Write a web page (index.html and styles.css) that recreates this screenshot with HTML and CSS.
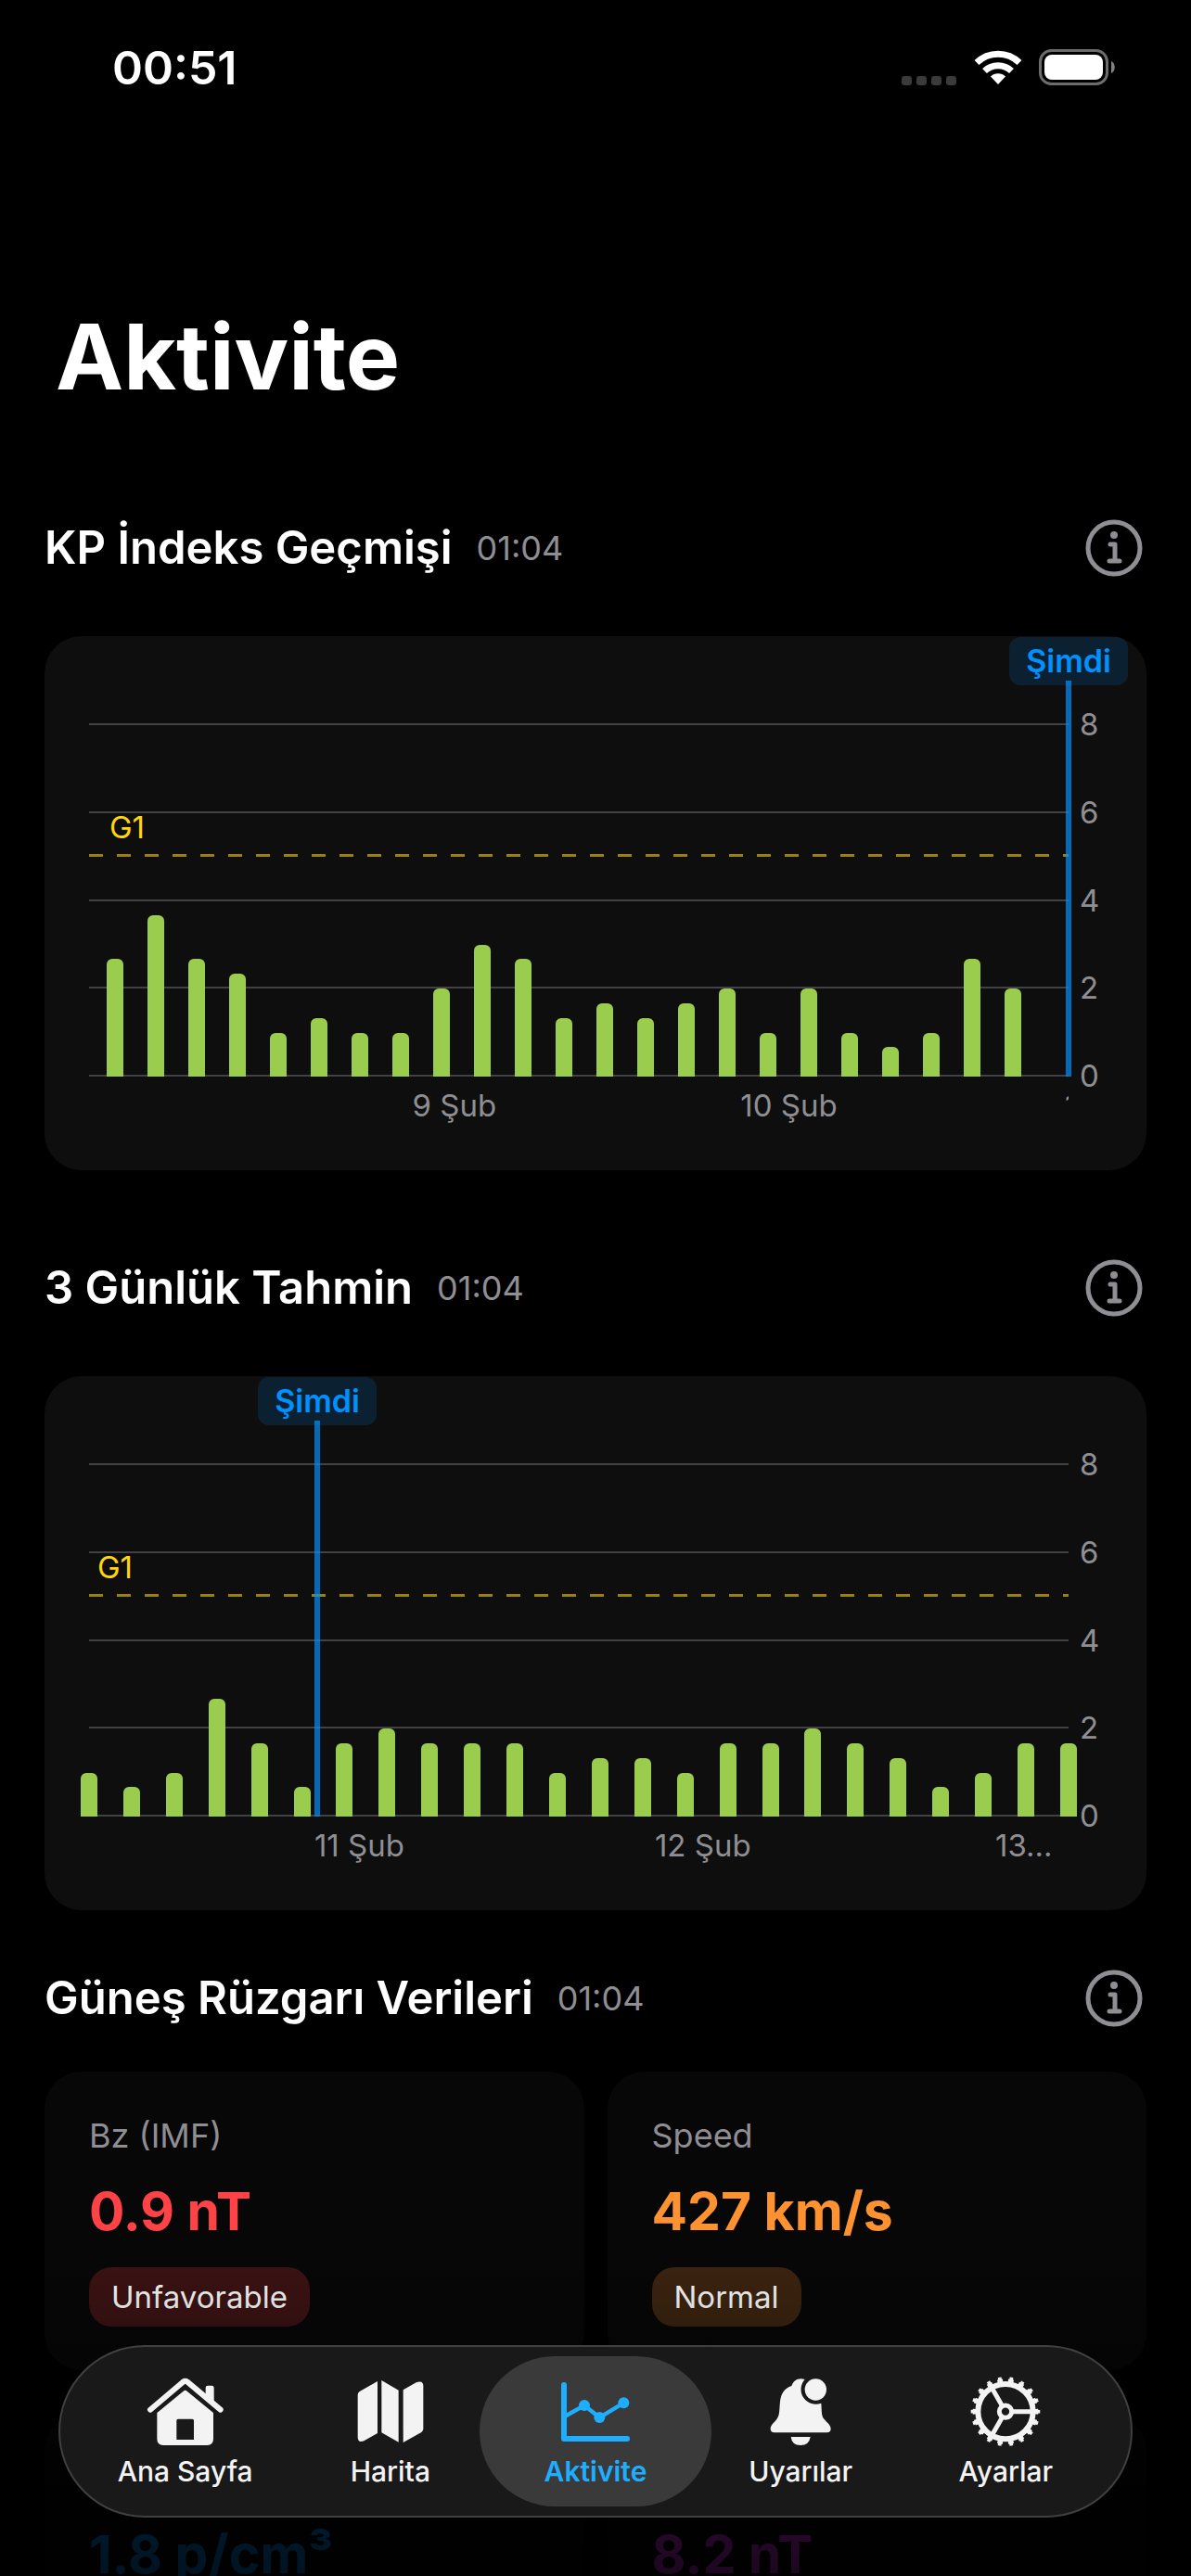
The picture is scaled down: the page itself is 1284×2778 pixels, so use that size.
FILE: index.html
```html
<!DOCTYPE html>
<html lang="tr">
<head>
    <meta charset="UTF-8">
    <meta name="viewport" content="width=device-width, initial-scale=1.0">
    <title>Aktivite</title>
    <link rel="stylesheet" href="styles.css">
</head>
<body>
    <svg class="sprite" aria-hidden="true">
        <symbol id="info" viewBox="0 0 62 62">
            <circle cx="31" cy="31" r="28" fill="none" stroke="currentColor" stroke-width="5"/>
            <circle cx="31" cy="17" r="4" fill="currentColor"/>
            <path d="M27 27h5v18M26 45h11" fill="none" stroke="currentColor" stroke-width="5" stroke-linecap="round" stroke-linejoin="round"/>
        </symbol>
    </svg>

    <header class="status-bar">
        <span class="clock">00:51</span>
        <div class="status-icons">
            <svg width="60" height="40" viewBox="0 0 60 40">
                <g fill="#3a3a3a">
                    <rect x="0" y="29" width="11" height="10" rx="3"/>
                    <rect x="16" y="29" width="11" height="10" rx="3"/>
                    <rect x="32" y="29" width="11" height="10" rx="3"/>
                    <rect x="48" y="29" width="11" height="10" rx="3"/>
                </g>
            </svg>
            <svg width="52" height="40" viewBox="0 0 52 40">
                <g fill="none" stroke="#fff" stroke-width="7">
                    <path d="M3 14.500A33 33 0 0 1 49 14.500"/>
                    <path d="M11.500 23.500A21 21 0 0 1 40.500 23.500"/>
                </g>
                <path d="M26 38l-8-8.500a11.500 11.500 0 0 1 16 0z" fill="#fff"/>
            </svg>
            <svg width="84" height="40" viewBox="0 0 84 40">
                <rect x="1.500" y="1.500" width="72" height="36" rx="12" fill="none" stroke="#6c6c6c" stroke-width="3"/>
                <rect x="6" y="6" width="63" height="27" rx="8" fill="#fff"/>
                <path d="M78 13c5 2 5 11 0 13z" fill="#808080"/>
            </svg>
        </div>
    </header>

    <main class="content">
        <h1>Aktivite</h1>

        <section>
            <div class="section-header">
                <h2>KP İndeks Geçmişi</h2>
                <time>01:04</time>
                <button class="info-button" type="button" aria-label="Bilgi"><svg><use href="#info"/></svg></button>
            </div>
            <div class="card chart">
                <div class="plot">
                    <ul class="grid-lines">
                        <li><span>8</span></li>
                        <li><span>6</span></li>
                        <li><span>4</span></li>
                        <li><span>2</span></li>
                        <li><span>0</span></li>
                    </ul>
                    <div class="threshold threshold-history"><span>G1</span></div>
                    <div class="bars bars-history">
                        <i style="--kp: 2.67"></i>
                        <i style="--kp: 3.67"></i>
                        <i style="--kp: 2.67"></i>
                        <i style="--kp: 2.33"></i>
                        <i style="--kp: 1"></i>
                        <i style="--kp: 1.33"></i>
                        <i style="--kp: 1"></i>
                        <i style="--kp: 1"></i>
                        <i style="--kp: 2"></i>
                        <i style="--kp: 3"></i>
                        <i style="--kp: 2.67"></i>
                        <i style="--kp: 1.33"></i>
                        <i style="--kp: 1.67"></i>
                        <i style="--kp: 1.33"></i>
                        <i style="--kp: 1.67"></i>
                        <i style="--kp: 2"></i>
                        <i style="--kp: 1"></i>
                        <i style="--kp: 2"></i>
                        <i style="--kp: 1"></i>
                        <i style="--kp: 0.67"></i>
                        <i style="--kp: 1"></i>
                        <i style="--kp: 2.67"></i>
                        <i style="--kp: 2"></i>
                    </div>
                    <div class="now" style="left: 100%"><span>Şimdi</span></div>
                </div>
                <div class="days days-history">
                    <span>9 Şub</span>
                    <span>10 Şub</span>
                    <span>11 Şub</span>
                </div>
            </div>
        </section>

        <section>
            <div class="section-header">
                <h2>3 Günlük Tahmin</h2>
                <time>01:04</time>
                <button class="info-button" type="button" aria-label="Bilgi"><svg><use href="#info"/></svg></button>
            </div>
            <div class="card chart">
                <div class="plot">
                    <ul class="grid-lines">
                        <li><span>8</span></li>
                        <li><span>6</span></li>
                        <li><span>4</span></li>
                        <li><span>2</span></li>
                        <li><span>0</span></li>
                    </ul>
                    <div class="threshold threshold-forecast"><span>G1</span></div>
                    <div class="bars bars-forecast">
                        <i style="--kp: 1"></i>
                        <i style="--kp: 0.67"></i>
                        <i style="--kp: 1"></i>
                        <i style="--kp: 2.67"></i>
                        <i style="--kp: 1.67"></i>
                        <i style="--kp: 0.67"></i>
                        <i style="--kp: 1.67"></i>
                        <i style="--kp: 2"></i>
                        <i style="--kp: 1.67"></i>
                        <i style="--kp: 1.67"></i>
                        <i style="--kp: 1.67"></i>
                        <i style="--kp: 1"></i>
                        <i style="--kp: 1.33"></i>
                        <i style="--kp: 1.33"></i>
                        <i style="--kp: 1"></i>
                        <i style="--kp: 1.67"></i>
                        <i style="--kp: 1.67"></i>
                        <i style="--kp: 2"></i>
                        <i style="--kp: 1.67"></i>
                        <i style="--kp: 1.33"></i>
                        <i style="--kp: 0.67"></i>
                        <i style="--kp: 1"></i>
                        <i style="--kp: 1.67"></i>
                        <i style="--kp: 1.67"></i>
                    </div>
                    <div class="now" style="left: 23.3%"><span>Şimdi</span></div>
                </div>
                <div class="days days-forecast">
                    <span>11 Şub</span>
                    <span>12 Şub</span>
                    <span>13...</span>
                </div>
            </div>
        </section>

        <section>
            <div class="section-header">
                <h2>Güneş Rüzgarı Verileri</h2>
                <time>01:04</time>
                <button class="info-button" type="button" aria-label="Bilgi"><svg><use href="#info"/></svg></button>
            </div>
            <div class="wind-grid">
                <div class="wind-card red">
                    <h3>Bz (IMF)</h3>
                    <p>0.9 nT</p>
                    <span class="badge">Unfavorable</span>
                </div>
                <div class="wind-card orange">
                    <h3>Speed</h3>
                    <p>427 km/s</p>
                    <span class="badge">Normal</span>
                </div>
                <div class="wind-card blue">
                    <h3>Density</h3>
                    <p>1.8 p/cm³</p>
                </div>
                <div class="wind-card purple">
                    <h3>Bt (Total)</h3>
                    <p>8.2 nT</p>
                </div>
            </div>
        </section>
    </main>

    <div class="bottom-fade"></div>

    <nav class="tab-bar">
        <a href="#">
            <svg viewBox="9 36 252 234">
                <path d="M21 146L127 56Q134 51 141 56L248 146" fill="none" stroke="currentColor" stroke-width="18" stroke-linecap="round" stroke-linejoin="round"/>
                <path d="M200 104V75q0-7 7-7h13q7 0 7 7v52z" fill="currentColor"/>
                <path d="M128 86q6-5 12 0l85 70v85q0 20-20 20H63q-20 0-20-20v-85zM106 181v62h56v-62q0-5-5-5h-46q-5 0-5 5z" fill="currentColor" fill-rule="evenodd"/>
            </svg>
            Ana Sayfa
        </a>
        <a href="#">
            <svg viewBox="673 36 252 234">
                <g fill="currentColor">
                    <path d="M757 54v168l-44 25q-20 8-20-12V98q0-7 6-11z"/>
                    <path d="M770 51l55 32v168l-55-31z"/>
                    <path d="M840 82l42-24q23-9 23 12v138q0 7-6 11l-59 33z"/>
                </g>
            </svg>
            Harita
        </a>
        <a class="active" href="#" aria-current="page">
            <svg viewBox="1332 36 252 234">
                <path d="M1356 66V240H1560" fill="none" stroke="currentColor" stroke-width="18" stroke-linecap="round" stroke-linejoin="round"/>
                <path d="M1358 168L1422 132L1471 171L1549 124" fill="none" stroke="currentColor" stroke-width="13"/>
                <g fill="currentColor">
                    <circle cx="1422" cy="132" r="18"/>
                    <circle cx="1471" cy="171" r="18"/>
                    <circle cx="1549" cy="124" r="18"/>
                </g>
            </svg>
            Aktivite
        </a>
        <a href="#">
            <svg viewBox="418 36 252 234">
                <g fill="currentColor">
                    <path d="M558 48A48 48 0 0 0 611 125C613 150 611 166 621 177C632 190 642 196 642 208Q642 220 629 220H460Q447 220 447 208C447 196 457 190 467 177C477 164 475 150 478 120C481 92 493 77 515 69C523 50 537 42 558 48z"/>
                    <circle cx="593" cy="81" r="35"/>
                    <path d="M513 234h63q-4 27-32 27t-31-27z"/>
                </g>
            </svg>
            Uyarılar
        </a>
        <a href="#">
            <svg viewBox="1084 36 252 234">
                <g fill="none" stroke="currentColor">
                    <circle cx="1210" cy="152" r="89" stroke-width="18"/>
                    <circle cx="1210" cy="152" r="100" stroke-width="12" pathLength="360" stroke-dasharray="10 10" stroke-dashoffset="5"/>
                    <circle cx="1210" cy="152" r="107" stroke-width="10" pathLength="360" stroke-dasharray="6 14" stroke-dashoffset="3"/>
                    <circle cx="1210" cy="152" r="20" stroke-width="15"/>
                    <path d="M1234 152H1296M1198 131L1167 77M1198 173L1167 227" stroke-width="15"/>
                </g>
            </svg>
            Ayarlar
        </a>
    </nav>
</body>
</html>
```
FILE: styles.css
```css
* {
    box-sizing: border-box;
}

body {
    margin: 0;
    height: 100vh;
    display: flex;
    flex-direction: column;
    position: relative;
    overflow: hidden;
    background: #000;
    color: #fff;
    font-family: Inter, "Liberation Sans", sans-serif;
}

h1, h2, h3, p, ul {
    margin: 0;
    padding: 0;
}

.sprite {
    position: absolute;
    width: 0;
    height: 0;
}

/* Status bar */
.status-bar {
    flex: none;
    height: 146px;
    padding: 0 80px 0 121px;
    display: flex;
    align-items: center;
    justify-content: space-between;
}

.clock {
    font-size: 50px;
    font-weight: 600;
}

.status-icons {
    display: flex;
    align-items: center;
    gap: 18px;
}

/* Scrolling content */
.content {
    flex: 1;
    min-height: 0;
    overflow-y: auto;
    scrollbar-width: none;
    padding: 179px 48px 0;
}

h1 {
    padding-left: 12px;
    font-size: 98px;
    line-height: 120px;
    font-weight: 700;
    margin-bottom: 115px;
}

section {
    margin-bottom: 96px;
}

section:nth-of-type(2) {
    margin-bottom: 64px;
}

.section-header {
    display: flex;
    align-items: center;
    gap: 26px;
    padding-right: 4px;
    margin-bottom: 64px;
}

section:nth-of-type(3) .section-header {
    margin-bottom: 48px;
}

h2 {
    font-size: 49px;
    line-height: 62px;
    font-weight: 600;
}

time {
    color: #8e8e93;
    font-size: 36px;
}

.info-button {
    width: 62px;
    height: 62px;
    margin-left: auto;
    padding: 0;
    border: none;
    background: none;
    color: #8e8e93;
    cursor: pointer;
}

.info-button svg {
    display: block;
    width: 62px;
    height: 62px;
}

.card {
    background: #0e0e0e;
    border-radius: 40px;
}

/* Charts: the plot is 9 KP units high */
.chart {
    padding: 48px 84px 50px 48px;
}

.plot {
    position: relative;
    height: 427px;
}

.grid-lines {
    position: absolute;
    inset: 46px 0 0;
    display: flex;
    flex-direction: column;
    justify-content: space-between;
    list-style: none;
}

.grid-lines li {
    height: 2px;
    background: #424245;
    display: flex;
    align-items: center;
}

.grid-lines span {
    margin-left: 100%;
    padding-left: 12px;
    color: #8e8e93;
    font-size: 33px;
}

.threshold {
    position: absolute;
    left: 0;
    right: 0;
    bottom: calc(100% * 5 / 9);
    height: 3px;
    background: repeating-linear-gradient(to right, #9b8109 0 15px, transparent 15px 30px);
}

.threshold span {
    position: absolute;
    bottom: 12px;
    color: #ffd60a;
    font-size: 33px;
    line-height: 40px;
}

.threshold-history span {
    left: 22px;
}

.threshold-forecast span {
    left: 9px;
}

.bars {
    position: relative;
    height: 100%;
    display: flex;
    align-items: flex-end;
    justify-content: space-between;
}

.bars-history {
    margin: 0 51px 0 19px;
}

.bars-forecast {
    margin: 0 -9px;
}

.bars i {
    width: 18px;
    height: calc(100% * var(--kp) / 9);
    border-radius: 6px 6px 0 0;
    background: #9acd4e;
}

.now {
    position: absolute;
    top: 0;
    bottom: 0;
    width: 6px;
    margin-left: -3px;
    background: rgba(0, 145, 255, 0.7);
}

.now span {
    position: absolute;
    bottom: calc(100% - 5px);
    left: 50%;
    transform: translateX(-50%);
    padding: 0 18px;
    border-radius: 12px;
    background: rgba(0, 145, 255, 0.15);
    color: #0091ff;
    font-size: 34px;
    line-height: 52px;
    font-weight: 600;
}

.days {
    display: grid;
    margin-top: 11px;
    color: #8e8e93;
    font-size: 33px;
    line-height: 40px;
    white-space: nowrap;
}

.days span {
    overflow: hidden;
}

.days-history {
    padding-left: 33%;
    grid-template-columns: 50% 1fr 4px;
}

.days-forecast {
    padding-left: 23%;
    grid-template-columns: 367fr 367fr 79fr;
}

/* Solar wind */
.wind-grid {
    display: grid;
    grid-template-columns: 1fr 1fr;
    gap: 48px 25px;
}

.wind-card {
    height: 322px;
    padding: 45px 48px 47px;
    border-radius: 40px;
    background: #070707;
}

h3 {
    color: #8e8e93;
    font-size: 36px;
    line-height: 48px;
    font-weight: 400;
}

.wind-card p {
    margin: 22px 0 24px;
    font-size: 57px;
    line-height: 72px;
    font-weight: 700;
}

.badge {
    display: inline-block;
    padding: 0 24px;
    border-radius: 24px;
    color: #fff;
    font-size: 33px;
    line-height: 64px;
}

.red p { color: #ff4245; }
.orange p { color: #ff9230; }
.blue p { color: #0091ff; }
.purple p { color: #db34f2; }
.red .badge { background: rgba(255, 66, 69, 0.22); }
.orange .badge { background: rgba(255, 146, 48, 0.22); }

.bottom-fade {
    position: absolute;
    left: 0;
    right: 0;
    bottom: 0;
    height: 378px;
    background: linear-gradient(rgba(0, 0, 0, 0), rgba(0, 0, 0, 0.12) 22%, rgba(0, 0, 0, 0.8) 75%, rgba(0, 0, 0, 0.87));
}

/* Tab bar */
.tab-bar {
    position: absolute;
    left: 63px;
    right: 63px;
    bottom: 63px;
    display: grid;
    grid-template-columns: repeat(5, 1fr);
    padding: 10px 24px;
    border: 2px solid #404040;
    border-radius: 93px;
    background: rgba(26, 26, 26, 0.98);
}

.tab-bar a {
    display: flex;
    flex-direction: column;
    align-items: center;
    gap: 9px;
    height: 162px;
    padding-top: 21px;
    border-radius: 81px;
    color: #f3f3f3;
    font-size: 30px;
    line-height: 32px;
    font-weight: 500;
    text-decoration: none;
}

.tab-bar svg {
    width: 84px;
    height: 78px;
}

.tab-bar .active {
    margin: 0 -14px;
    background: #3a3a3a;
    color: #1eaeff;
    font-weight: 600;
}
```
